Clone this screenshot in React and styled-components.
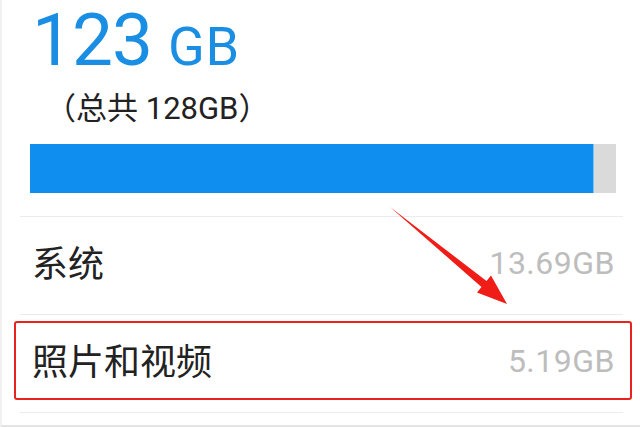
import React from "react";
import styled, { createGlobalStyle } from "styled-components";

const GlobalStyle = createGlobalStyle`
  html, body {
    margin: 0;
    padding: 0;
    background: #ffffff;
  }
`;

const Page = styled.div`
  position: relative;
  box-sizing: border-box;
  width: 640px;
  height: 427px;
  overflow: hidden;
  background: #ffffff;
  border-left: 2px solid #f1f1f1;
  border-bottom: 2px solid #e4e4e4;
  font-family: Roboto, "Noto Sans CJK SC", sans-serif;
`;

const Header = styled.div`
  padding: 4px 0 0 30px;
`;

const Used = styled.div`
  display: flex;
  align-items: baseline;
  color: #1a8ee2;
  line-height: 73px;
`;

const Amount = styled.span`
  font-size: 73px;
  letter-spacing: -1px;
`;

const Unit = styled.span`
  font-size: 54px;
  margin-left: 16px;
  letter-spacing: 0.5px;
`;

const Total = styled.div`
  margin: 10px 0 0 13px;
  font-size: 31px;
  line-height: 31px;
  color: #222222;
`;

const Bar = styled.div`
  margin: 20px 24px 0 28px;
  height: 49px;
  background: #dadada;
  display: flex;
`;

const Fill = styled.div`
  height: 100%;
  background: #108ef0;
  border-right: 1px solid #7ec2f5;
`;

const List = styled.div`
  margin: 23px 17px 0 18px;
  border-top: 1px solid #ececec;
`;

const Row = styled.div`
  position: relative;
  height: 97px;
  display: flex;
  align-items: center;
  justify-content: space-between;
  padding: 0 8px 0 12px;
  border-bottom: 1px solid #ececec;
`;

const Label = styled.span`
  font-family: "Noto Sans CJK SC", sans-serif;
  font-size: 36px;
  color: #222222;
  margin-top: -10px;
`;

const Size = styled.span`
  font-size: 32px;
  color: #bdbdbd;
  letter-spacing: 0.5px;
  margin-top: -6px;
`;

const Highlight = styled.div`
  position: absolute;
  left: -6px;
  right: -9px;
  top: 6px;
  bottom: 12px;
  border: 2.5px solid #e8221d;
  border-radius: 3px;
  pointer-events: none;
`;

const Overlay = styled.svg`
  position: absolute;
  left: 0;
  top: 0;
  pointer-events: none;
`;

function Arrow() {
  return (
    <Overlay width="640" height="427" viewBox="0 0 640 427">
      <polygon
        points="388,207 484.5,281 489,275.5 505,304 475,292.5 479.5,287"
        fill="#f01c17"
      />
    </Overlay>
  );
}

const items = [
  { name: "系统", size: "13.69GB" },
  { name: "照片和视频", size: "5.19GB", marked: true },
];

export default function App() {
  const used = 123;
  const total = 128;
  return (
    <>
      <GlobalStyle />
      <Page>
        <Header>
          <Used>
            <Amount>{used}</Amount>
            <Unit>GB</Unit>
          </Used>
          <Total>（总共 {total}GB）</Total>
        </Header>
        <Bar>
          <Fill style={{ width: `${(used / total) * 100}%` }} />
        </Bar>
        <List>
          {items.map((item) => (
            <Row key={item.name}>
              <Label>{item.name}</Label>
              <Size>{item.size}</Size>
              {item.marked && <Highlight />}
            </Row>
          ))}
        </List>
        <Arrow />
      </Page>
    </>
  );
}
